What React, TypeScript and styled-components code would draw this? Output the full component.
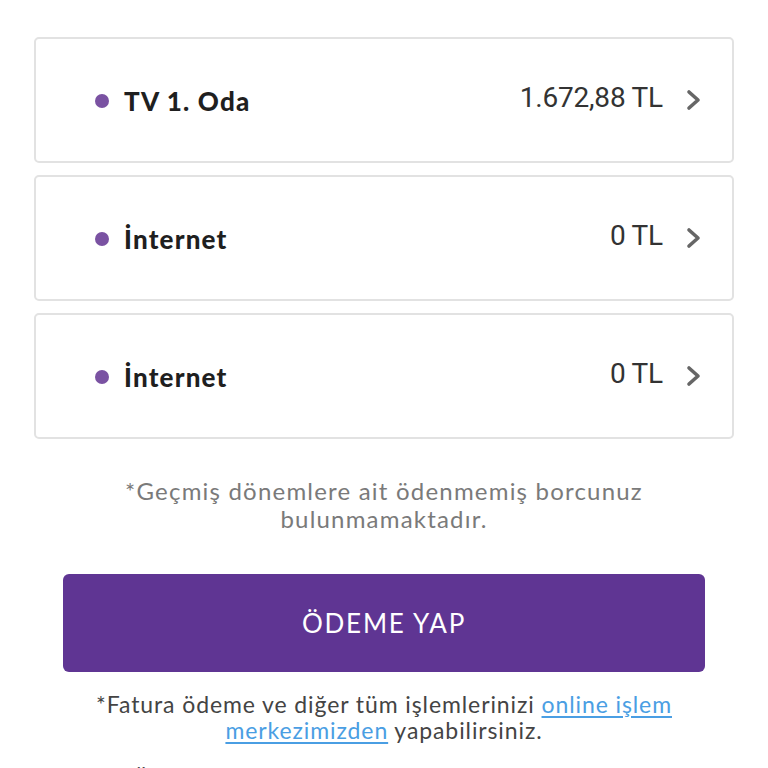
import React from "react";
import styled, { createGlobalStyle } from "styled-components";

const Global = createGlobalStyle`
  html, body { margin: 0; padding: 0; background: #ffffff; }
  body { font-family: "Lato", "Noto Sans", sans-serif; overflow: hidden; }
`;

const Page = styled.div`
  width: 768px;
  height: 768px;
  overflow: hidden;
  box-sizing: border-box;
  padding: 37px 34px 0 34px;
  display: flex;
  flex-direction: column;
  & > * { flex-shrink: 0; }
`;

const List = styled.div`
  display: flex;
  flex-direction: column;
  gap: 12px;
`;

const Card = styled.div`
  height: 126px;
  flex-shrink: 0;
  box-sizing: border-box;
  border: 2px solid #e2e2e2;
  border-radius: 5px;
  background: #fff;
  display: flex;
  align-items: center;
  padding: 0 30px 0 59px;
`;

const Dot = styled.span`
  width: 14px;
  height: 14px;
  border-radius: 50%;
  background: #7a52a2;
  flex: none;
  margin-right: 15px;
  margin-top: 2px;
`;

const Title = styled.span`
  font-family: "Lato", sans-serif;
  font-weight: 900;
  font-size: 26px;
  letter-spacing: 1.2px;
  color: #1f1f1f;
  flex: 1;
  margin-top: 2px;
`;

const Amount = styled.span`
  font-family: "Roboto", sans-serif;
  font-weight: 400;
  font-size: 28px;
  color: #333;
  letter-spacing: -0.2px;
  margin-top: -6px;
`;

const Chevron = styled.svg`
  width: 16px;
  height: 22px;
  margin-left: 23px;
  flex: none;
`;

const Note = styled.p`
  margin: 38px 0 0 0;
  text-align: center;
  font-family: "Lato", sans-serif;
  font-size: 24px;
  line-height: 28px;
  letter-spacing: 1.2px;
  color: #7a7a7a;
`;

const PayButton = styled.button`
  margin: 41px 29px 0 29px;
  height: 98px;
  border: none;
  border-radius: 6px;
  background: #5f3593;
  color: #fff;
  font-family: "Lato", sans-serif;
  font-size: 26px;
  font-weight: 400;
  letter-spacing: 1.8px;
  cursor: pointer;
`;

const Info = styled.p`
  margin: 19px 0 0 0;
  text-align: center;
  font-family: "Lato", sans-serif;
  font-size: 23px;
  line-height: 26px;
  letter-spacing: 0.9px;
  color: #444;
`;

const Link = styled.a`
  color: #4a9ee3;
  text-decoration: underline;
  text-underline-offset: 3px;
`;

const Cut = styled.p`
  margin: 22px 0 0 98px;
  font-family: "Lato", sans-serif;
  font-size: 23px;
  letter-spacing: 0.9px;
  color: #444;
`;

const items = [
  { name: "TV 1. Oda", amount: "1.672,88 TL" },
  { name: "İnternet", amount: "0 TL" },
  { name: "İnternet", amount: "0 TL" },
];

export default function App() {
  return (
    <>
      <Global />
      <Page>
        <List>
          {items.map((it, i) => (
            <Card key={i}>
              <Dot />
              <Title>{it.name}</Title>
              <Amount>{it.amount}</Amount>
              <Chevron viewBox="0 0 16 22">
                <path d="M3 3 L12 11 L3 19" fill="none" stroke="#666" strokeWidth="3.6" strokeLinecap="round" strokeLinejoin="round" />
              </Chevron>
            </Card>
          ))}
        </List>
        <Note>
          *Geçmiş dönemlere ait ödenmemiş borcunuz
          <br />
          bulunmamaktadır.
        </Note>
        <PayButton>ÖDEME YAP</PayButton>
        <Info>
          *Fatura ödeme ve diğer tüm işlemlerinizi <Link href="#">online işlem</Link>
          <br />
          <Link href="#">merkezimizden</Link> yapabilirsiniz.
        </Info>
        <Cut>Ödeme</Cut>
      </Page>
    </>
  );
}
